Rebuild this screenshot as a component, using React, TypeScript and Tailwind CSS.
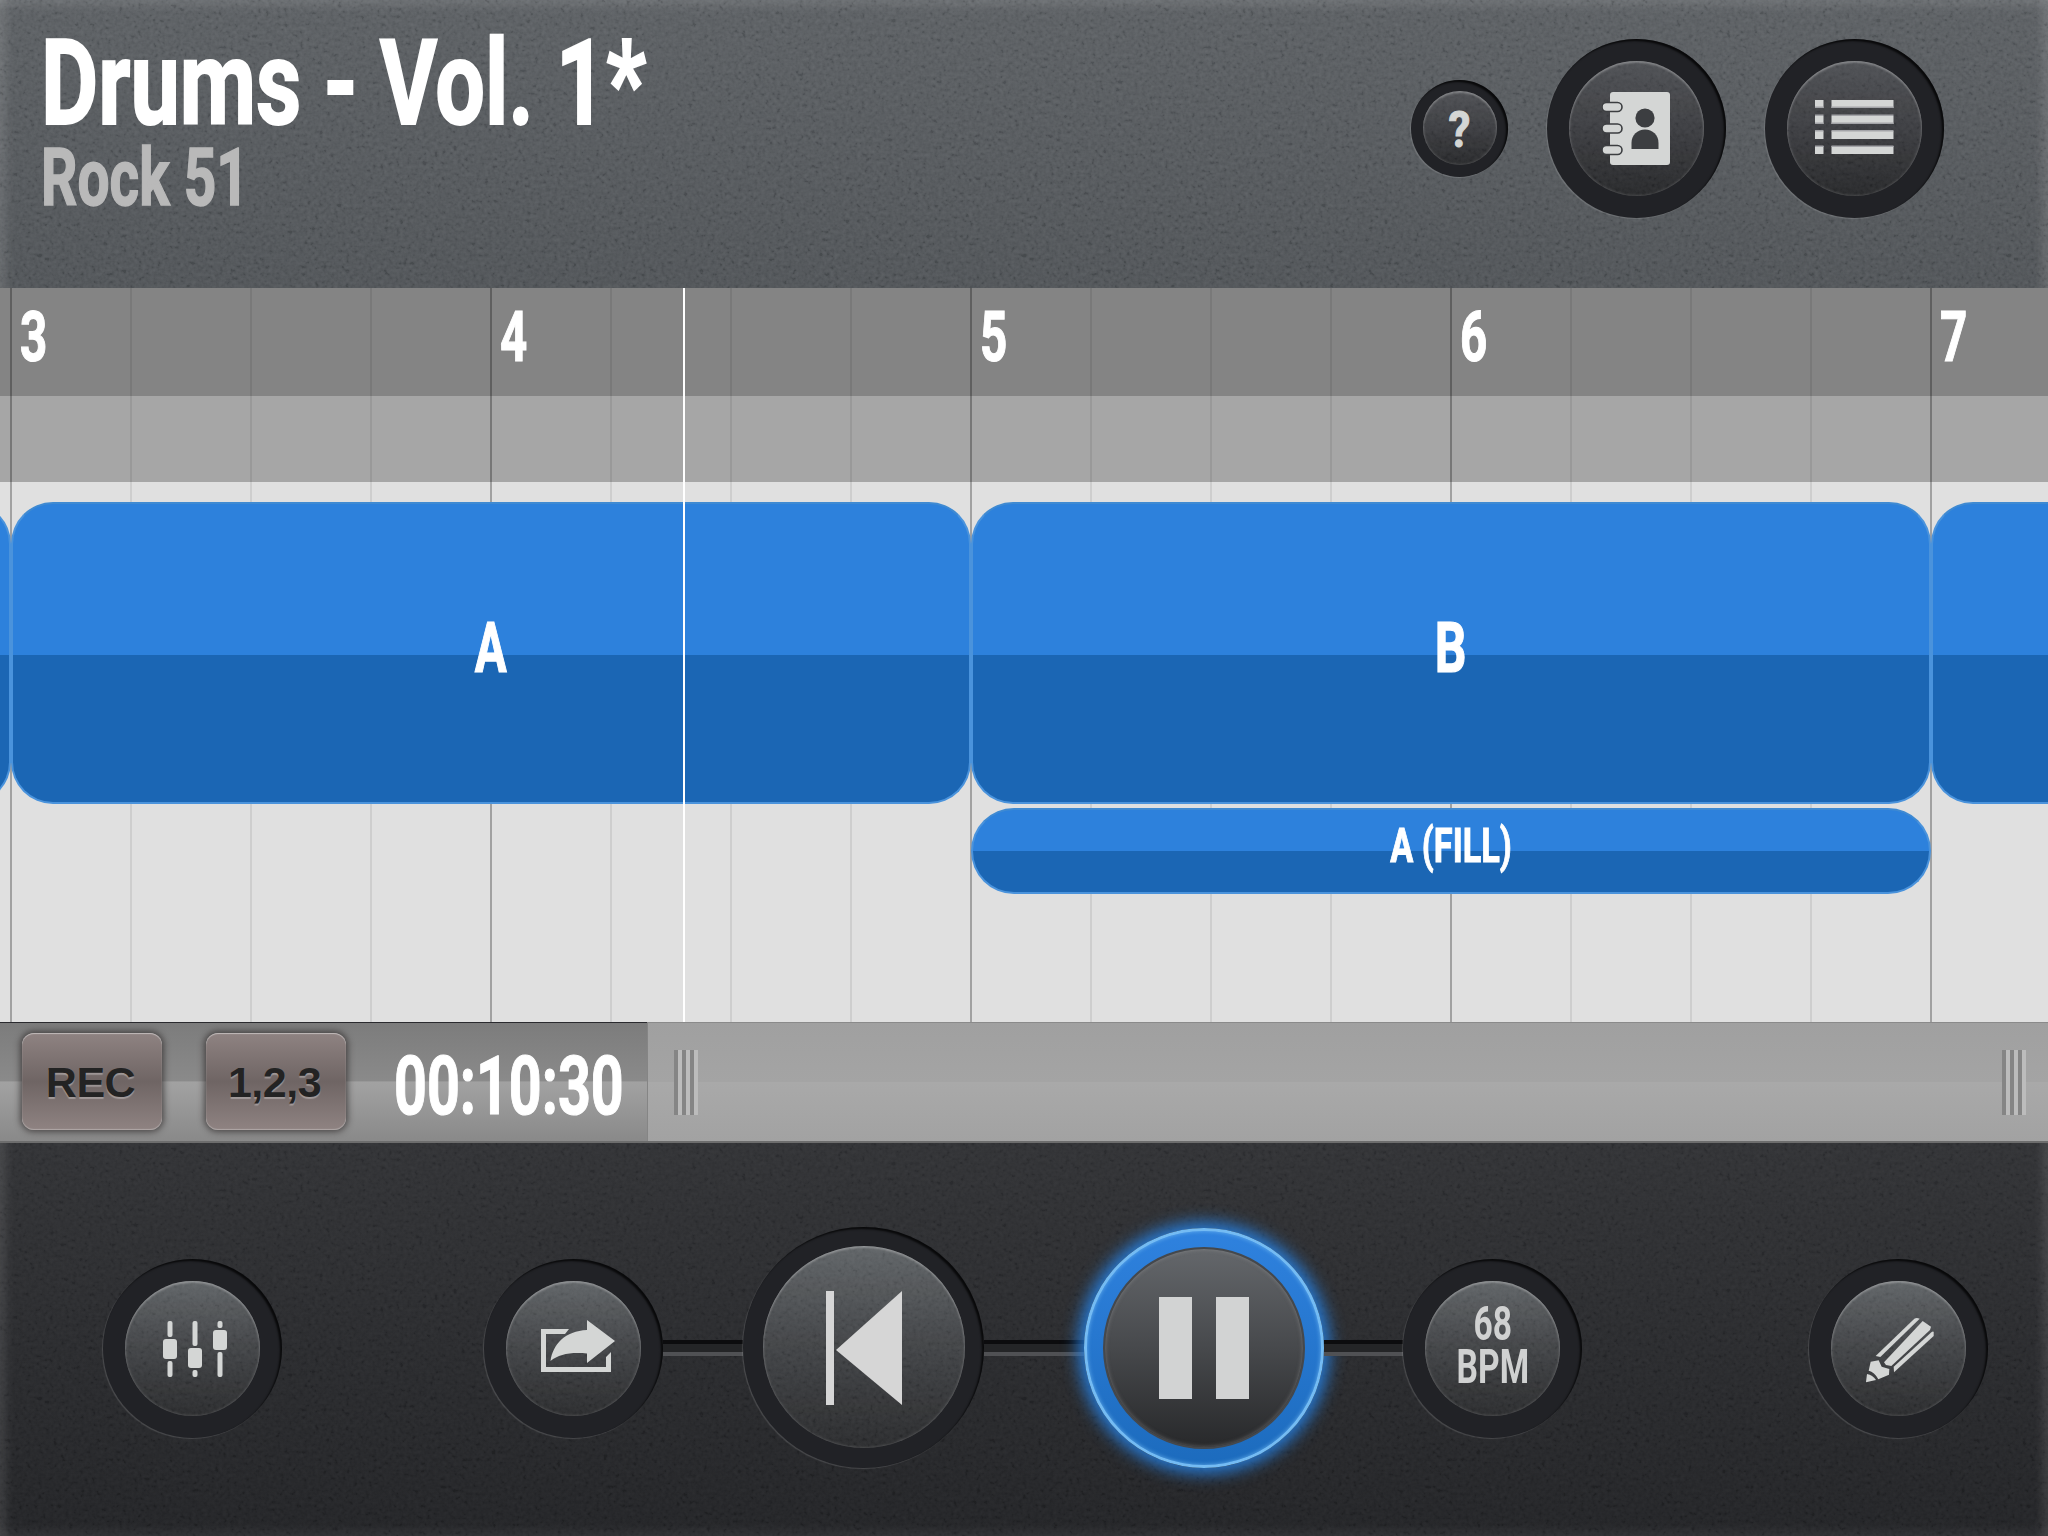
import type { ReactNode } from "react";

const DIN = "font-[Roboto,sans-serif] font-bold whitespace-nowrap";

function Noise({ opacity }: { opacity: string }) {
  return (
    <svg className={`pointer-events-none absolute inset-0 h-full w-full ${opacity}`} aria-hidden="true">
      <filter id="grain">
        <feTurbulence type="fractalNoise" baseFrequency="0.26" numOctaves="2" seed="4" />
        <feColorMatrix values="0.33 0.33 0.33 0 0  0.33 0.33 0.33 0 0  0.33 0.33 0.33 0 0  0 0 0 0 1" />
        <feComponentTransfer>
          <feFuncR type="linear" slope="2" intercept="-0.65" />
          <feFuncG type="linear" slope="2" intercept="-0.65" />
          <feFuncB type="linear" slope="2" intercept="-0.65" />
        </feComponentTransfer>
      </filter>
      <rect width="100%" height="100%" filter="url(#grain)" />
    </svg>
  );
}

type KnobSize = "sm" | "md" | "lg";

const wells: Record<KnobSize, string> = {
  sm: "size-[97px]",
  md: "size-[179px]",
  lg: "size-[241px]",
};
const caps: Record<KnobSize, string> = {
  sm: "size-[74px]",
  md: "size-[135px]",
  lg: "size-[202px]",
};

function Knob({ size, label, dim, children }: { size: KnobSize; label: string; dim?: boolean; children: ReactNode }) {
  return (
    <button
      aria-label={label}
      className={`relative flex shrink-0 items-center justify-center rounded-full bg-[#212226] shadow-[inset_-2px_2px_2px_rgba(0,0,0,0.75),-1px_1px_1px_rgba(255,255,255,0.14)] ${wells[size]} ${
        size === "md" && !dim ? "mt-[2px]" : ""
      }`}
    >
      <span
        className={`relative -mt-px flex items-center justify-center overflow-hidden rounded-full shadow-[inset_0_2px_2px_rgba(255,255,255,0.22),inset_0_0_3px_rgba(255,255,255,0.28)] ${caps[size]} ${
          dim ? "bg-linear-to-b from-[#4e5054] via-[#3b3c40] to-[#252628]" : "bg-linear-to-b from-[#606467] via-[#404245] to-[#28292b]"
        }`}
      >
        <Noise opacity="opacity-[0.06]" />
        <span className="relative flex items-center justify-center">{children}</span>
      </span>
    </button>
  );
}

function Connector({ width }: { width: string }) {
  return <div className={`h-4 shrink-0 border-t-4 border-b-4 border-t-[#0c0c0e] border-b-[#505154] bg-[#242527] ${width}`} />;
}

function BookIcon() {
  return (
    <svg width="68" height="74" viewBox="0 0 68 74" className="-translate-x-px translate-y-px">
      <rect x="8" y="0" width="60" height="73" rx="3" fill="#d4d6d5" />
      {[10.5, 32, 53.5].map((y) => (
        <rect key={y} x="0" y={y} width="20" height="9" rx="4.500" fill="#d4d6d5" stroke="#3c3e41" strokeWidth="1.6" />
      ))}
      <circle cx="43" cy="26" r="9.600" fill="#3c3e41" />
      <path d="M29.500 57V51C29.500 43 35.500 37.500 43 37.500C50.500 37.500 56.500 43 56.500 51V57Z" fill="#3c3e41" />
    </svg>
  );
}

function ListIcon() {
  return (
    <svg width="79" height="54" viewBox="0 0 79 54" className="-translate-y-px">
      {[0, 16, 31, 46].map((y) => (
        <g key={y} fill="#d4d6d5">
          <rect x="0" y={y} width="8.500" height="8" />
          <rect x="16.500" y={y} width="62" height="8" />
        </g>
      ))}
      {[6.5, 14.5, 22.5, 30, 45.5].map((y) => (
        <g key={y} fill="#a3a4a8">
          <rect x="0" y={y} width="8.500" height="1.500" />
          <rect x="16.500" y={y} width="62" height="1.500" />
        </g>
      ))}
    </svg>
  );
}

function MixerIcon() {
  const faders = [
    { x: 7, knob: 18 },
    { x: 32, knob: 27 },
    { x: 57, knob: 9 },
  ];
  return (
    <svg width="64" height="56" viewBox="0 0 64 56" className="translate-x-[2px] translate-y-px">
      {faders.map((f) => (
        <g key={f.x} fill="#d4d6d5">
          <rect x={f.x - 2.5} y="0" width="5" height={f.knob - 2} rx="2" />
          <rect x={f.x - 7} y={f.knob} width="14" height="20" rx="3" />
          <rect x={f.x - 2.5} y={f.knob + 22} width="5" height={56 - f.knob - 22} rx="2" />
        </g>
      ))}
    </svg>
  );
}

function ShareIcon() {
  return (
    <svg width="74" height="53" viewBox="0 0 74 53" className="translate-x-[4px] -translate-y-[2px]">
      <path d="M0 9H28L24 14H5V47H65V37L70 32V52H0Z" fill="#d4d6d5" />
      <path d="M46 0L74 21L46 43V33.500C30 32 18 34 9.500 41C12 24 24 11 46 10Z" fill="#d4d6d5" />
    </svg>
  );
}

function PreviousIcon() {
  return (
    <svg width="76" height="114" viewBox="0 0 76 114" className="translate-y-px">
      <rect x="0" y="0" width="8" height="114" fill="#d6d6d6" />
      <path d="M76 0V114L10 59Z" fill="#d6d6d6" />
    </svg>
  );
}

function PencilIcon() {
  return (
    <svg width="96" height="96" viewBox="0 0 288 288" fill="#d4d6d5" className="translate-y-px">
      <path d="M74 165L190 53Q197 49 206 53L88 168Z" />
      <path d="M99 184L215 60L240 77L237 87L121 195L105 192Z" />
      <path d="M128 197L242 93Q248 90 248 94L248 105L129 214Z" />
      <path d="M59 182L83 178L92 197L115 204L114 221L82 235Q70 212 53 209Z" />
      <path d="M48 219Q65 222 75 237L45 244Z" />
    </svg>
  );
}

function Header() {
  return (
    <header className="relative flex h-[288px] shrink-0 justify-between bg-linear-to-b from-[#5a5e62] to-[#4e5256] pr-[104px] pl-[41px] shadow-[inset_0_14px_10px_-8px_rgba(255,255,255,0.1),inset_14px_0_10px_-8px_rgba(255,255,255,0.12),inset_-14px_0_10px_-8px_rgba(255,255,255,0.12)]">
      <Noise opacity="opacity-[0.09]" />
      <div className="relative flex flex-col">
        <h1 className={`mt-[30px] origin-left scale-x-[0.74] text-[119px] leading-[108px] text-white [-webkit-text-stroke:2px_white] ${DIN}`}>Drums - Vol. 1*</h1>
        <p className={`origin-left scale-x-[0.72] pt-px text-[79px] leading-[78px] text-[#b9b9b9] [-webkit-text-stroke:1.5px_#b9b9b9] ${DIN}`}>Rock 51</p>
      </div>
      <div className="relative flex h-[257px] items-center">
        <Knob size="sm" label="Help" dim>
          <span className={`translate-y-[2px] scale-x-[0.88] text-[50px] leading-none text-[#d4d6d5] [-webkit-text-stroke:1px_#d4d6d5] ${DIN}`}>?</span>
        </Knob>
        <div className="w-[39px]" />
        <Knob size="md" label="Library" dim>
          <BookIcon />
        </Knob>
        <div className="w-[39px]" />
        <Knob size="md" label="Menu" dim>
          <ListIcon />
        </Knob>
      </div>
    </header>
  );
}

function Clip({ label, stretch }: { label?: string; stretch?: string }) {
  return (
    <div className="flex h-[302px] w-[960px] shrink-0 items-center justify-center rounded-[42px] border-2 border-[#4a93dc] border-t-[#3f8ad2] bg-[linear-gradient(#2d81dc_0_50.6%,#1b66b4_50.6%)] bg-origin-border pb-[11px]">
      {label && <span className={`inline-block ${stretch}`}>{label}</span>}
    </div>
  );
}

function Timeline() {
  const beats = Array.from({ length: 17 }, (_, i) => i);
  const bars = [3, 4, 5, 6, 7];
  return (
    <main className="relative h-[734px] shrink-0 overflow-hidden bg-[#e0e0e0]">
      <div className="h-[108px] bg-[#848484]" />
      <div className="h-[86px] bg-[#a6a6a6]" />
      <div className="absolute inset-0 flex pl-[10px]">
        {beats.map((b) => (
          <div key={b} className={`w-[120px] shrink-0 border-l-2 ${b % 4 === 0 ? "border-black/28" : "border-black/8"}`} />
        ))}
      </div>
      <div className="absolute top-0 left-[10px] flex">
        {bars.map((n) => (
          <div key={n} className="w-[480px] shrink-0 pt-[13px] pl-[10px]">
            <span className={`inline-block origin-left scale-x-[0.67] text-[71px] leading-[72px] text-white [-webkit-text-stroke:1.2px_white] ${DIN}`}>{n}</span>
          </div>
        ))}
      </div>
      <div className={`relative mt-[20px] -ml-[949px] flex text-[71px] leading-[84px] text-white [-webkit-text-stroke:1.2px_white] ${DIN}`}>
        <Clip />
        <Clip label="A" stretch="scale-x-[0.67]" />
        <Clip label="B" stretch="scale-x-[0.7]" />
        <Clip />
      </div>
      <div
        className={`relative mt-[4px] ml-[971px] flex h-[86px] w-[960px] items-start justify-center rounded-[43px] border-2 border-[#4a93dc] border-t-[#3f8ad2] bg-[linear-gradient(#2d81dc_0_50%,#1b66b4_50%)] bg-origin-border pt-[8px] text-[48px] leading-[56px] text-white [-webkit-text-stroke:1px_white] ${DIN}`}
      >
        <span className="inline-block scale-x-[0.715]">A (FILL)</span>
      </div>
      <div className="absolute inset-y-0 left-[683px] w-[2px] bg-white" />
    </main>
  );
}

function PadButton({ children }: { children: ReactNode }) {
  return (
    <button className="flex h-[97px] w-[140px] items-center justify-center rounded-[12px] bg-linear-to-b from-[#8f8382] via-[#6f6564] to-[#8f8382] pt-[2px] pr-[3px] font-['Liberation_Sans',sans-serif] text-[43px] font-bold tracking-[-0.5px] text-[#232323] shadow-[0_0_6px_2px_rgba(40,36,36,0.65),inset_0_1px_1px_rgba(255,255,255,0.45),inset_0_-1px_1px_rgba(255,255,255,0.3)] [text-shadow:0_2px_1px_rgba(255,255,255,0.3)]">
      {children}
    </button>
  );
}

function Grip() {
  return (
    <div className="flex h-[65px] gap-1">
      {[0, 1, 2].map((i) => (
        <div key={i} className="w-1 bg-[#858585] shadow-[4px_0_0_#bcbcbc]" />
      ))}
    </div>
  );
}

function TransportStrip() {
  return (
    <section className="flex h-[121px] shrink-0 border-t border-b-2 border-t-[#2a2a2e] border-b-[#6d6d6d] bg-[linear-gradient(#7c7c7c,#8a8a8a_49%,#a2a2a2_50%,#898989)]">
      <div className="flex w-[647px] shrink-0 items-start pt-[10px] pl-[22px]">
        <PadButton>REC</PadButton>
        <div className="w-11" />
        <PadButton>1,2,3</PadButton>
        <div className="w-12" />
        <span className={`w-[230px] origin-left scale-x-[0.708] text-[81px] leading-[108px] text-white [-webkit-text-stroke:1.2px_white] ${DIN}`}>00:10:30</span>
      </div>
      <div className="-mt-px flex flex-1 items-center justify-between border-t border-l border-t-[#8a8a8a] border-l-[#858585] bg-[linear-gradient(#a0a0a0,#a4a4a4_50%,#a9a9a9_50%,#a2a2a2)] pr-[26px] pl-[26px]">
        <Grip />
        <Grip />
      </div>
    </section>
  );
}

function PauseButton() {
  return (
    <button
      aria-label="Pause"
      className="flex size-[240px] shrink-0 items-center justify-center rounded-full border-[3px] border-[#74bbf3] bg-linear-to-b from-[#2f82df] to-[#1c6bbd] bg-origin-border shadow-[0_0_16px_6px_rgba(38,134,238,0.85),inset_0_0_4px_rgba(116,187,243,0.8)]"
    >
      <span className="flex size-[202px] items-center justify-center gap-6 rounded-full border-2 border-[#45484c] bg-linear-to-b from-[#64676b] via-[#47494c] to-[#28292b] shadow-[inset_0_0_4px_rgba(160,160,160,0.5)]">
        <span className="h-[102px] w-[33px] bg-[#d2d3d3]" />
        <span className="h-[102px] w-[33px] bg-[#d2d3d3]" />
      </span>
    </button>
  );
}

function Controls() {
  return (
    <footer className="relative flex flex-1 items-center bg-linear-to-b from-[#2f3033] to-[#202124] pt-[16px] pl-[103px] shadow-[inset_0_-14px_10px_-8px_rgba(255,255,255,0.06),inset_14px_0_10px_-8px_rgba(255,255,255,0.1),inset_-14px_0_10px_-8px_rgba(255,255,255,0.1)]">
      <Noise opacity="opacity-[0.05]" />
      <div className="relative flex items-center">
        <Knob size="md" label="Mixer">
          <MixerIcon />
        </Knob>
        <div className="w-[202px]" />
        <Knob size="md" label="Share">
          <ShareIcon />
        </Knob>
        <Connector width="w-[80px]" />
        <Knob size="lg" label="Previous">
          <PreviousIcon />
        </Knob>
        <Connector width="w-[100px]" />
        <PauseButton />
        <Connector width="w-[79px]" />
        <Knob size="md" label="Tempo">
          <span className={`flex scale-x-[0.7] flex-col items-center pb-[6px] text-[48px] leading-[43px] text-[#d0d1d1] ${DIN}`}>
            <span>68</span>
            <span>BPM</span>
          </span>
        </Knob>
        <div className="w-[227px]" />
        <Knob size="md" label="Edit">
          <PencilIcon />
        </Knob>
      </div>
    </footer>
  );
}

export default function App() {
  return (
    <div className="flex h-[1536px] w-[2048px] flex-col overflow-hidden bg-[#2a2b2e]">
      <Header />
      <Timeline />
      <TransportStrip />
      <Controls />
    </div>
  );
}
